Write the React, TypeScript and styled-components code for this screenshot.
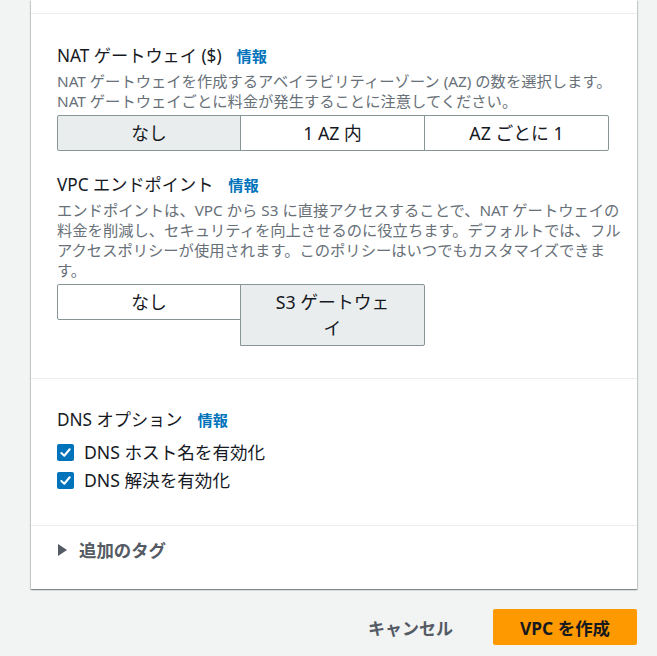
import React from "react";
import styled, { createGlobalStyle } from "styled-components";

const Global = createGlobalStyle`
  html, body { margin: 0; padding: 0; background: #f2f3f3; }
  body { font-family: "Noto Sans", "Noto Sans CJK JP", sans-serif; color: #16191f; }
  * { box-sizing: border-box; }
`;

const Page = styled.div`
  padding: 0 20px 0 31px;
`;

const Card = styled.div`
  background: #fff;
  box-shadow: 0 1px 1px 0 rgba(0, 28, 36, 0.3), 1px 1px 1px 0 rgba(0, 28, 36, 0.15),
    -1px 1px 1px 0 rgba(0, 28, 36, 0.15);
`;

const Section = styled.div<{ $pt: number; $pb: number }>`
  padding: ${(p) => p.$pt}px 12px ${(p) => p.$pb}px 26px;
  & + & { border-top: 1px solid #eaeded; }
`;

const Field = styled.div`
  & + & { margin-top: 23px; }
`;

const Label = styled.div`
  font-size: 17.2px;
  line-height: 22px;
  display: flex;
  align-items: baseline;
`;

const Info = styled.a`
  color: #0073bb;
  font-weight: 700;
  font-size: 15.2px;
  margin-left: 15px;
`;

const Desc = styled.div`
  margin-top: 4px;
  font-size: 15.3px;
  line-height: 20px;
  color: #687078;
`;

const Tiles = styled.div`
  margin-top: 4px;
  display: grid;
  grid-template-columns: repeat(3, 184px);
  align-items: start;
`;

const Tile = styled.div<{ $selected?: boolean; $pos: "first" | "mid" | "last" }>`
  border: 1px solid #879596;
  margin-left: ${(p) => (p.$pos === "first" ? 0 : -1)}px;
  border-radius: ${(p) =>
    p.$pos === "first" ? "2px 0 0 2px" : p.$pos === "last" ? "0 2px 2px 0" : "0"};
  background: ${(p) => (p.$selected ? "#eaeded" : "#fff")};
  padding: 4px 32px;
  min-height: 36px;
  text-align: center;
  font-size: 17.8px;
  line-height: 26px;
  color: #16191f;
`;

const CheckRow = styled.label`
  display: flex;
  align-items: center;
  gap: 10px;
  font-size: 17.6px;
  line-height: 22px;
  margin-top: 10px;
  & + & { margin-top: 6px; }
`;

const Box = styled.span`
  width: 17px;
  height: 17px;
  border-radius: 2px;
  background: #0073bb;
  display: inline-flex;
  align-items: center;
  justify-content: center;
  flex: none;
`;

const Expand = styled.div`
  display: flex;
  align-items: center;
  gap: 12px;
  font-size: 17.4px;
  line-height: 22px;
  font-weight: 700;
  color: #545b64;
`;

const Caret = styled.span`
  width: 0;
  height: 0;
  border-top: 6px solid transparent;
  border-bottom: 6px solid transparent;
  border-left: 9px solid #545b64;
  margin-left: 1px;
`;

const Footer = styled.div`
  display: flex;
  justify-content: flex-end;
  align-items: center;
  padding-top: 20px;
  gap: 20px;
`;

const LinkButton = styled.button`
  background: none;
  border: none;
  padding: 0 20px;
  font-family: inherit;
  font-size: 17px;
  font-weight: 700;
  color: #545b64;
  height: 36px;
`;

const Primary = styled.button`
  background: #ff9900;
  border: none;
  border-radius: 2px;
  width: 144px;
  height: 36px;
  font-family: inherit;
  font-size: 17.4px;
  font-weight: 700;
  color: #16191f;
`;

const Check = () => (
  <Box>
    <svg width="13" height="13" viewBox="0 0 14 14">
      <path d="M2.5 7.5 L5.7 10.5 L11.5 3.5" fill="none" stroke="#fff" strokeWidth="2.2" strokeLinecap="round" strokeLinejoin="round" />
    </svg>
  </Box>
);

export default function App() {
  return (
    <Page>
      <Global />
      <Card>
        <Section $pt={13} $pb={0} />
        <Section $pt={31} $pb={32}>
          <Field>
            <Label>
              NAT ゲートウェイ ($)<Info>情報</Info>
            </Label>
            <Desc>
              NAT ゲートウェイを作成するアベイラビリティーゾーン (AZ) の数を選択します。
              <br />
              NAT ゲートウェイごとに料金が発生することに注意してください。
            </Desc>
            <Tiles>
              <Tile $pos="first" $selected>なし</Tile>
              <Tile $pos="mid">1 AZ 内</Tile>
              <Tile $pos="last">AZ ごとに 1</Tile>
            </Tiles>
          </Field>
          <Field>
            <Label>
              VPC エンドポイント<Info>情報</Info>
            </Label>
            <Desc>
              エンドポイントは、VPC から S3 に直接アクセスすることで、NAT ゲートウェイの
              <br />
              料金を削減し、セキュリティを向上させるのに役立ちます。デフォルトでは、フル
              <br />
              アクセスポリシーが使用されます。このポリシーはいつでもカスタマイズできま
              <br />
              す。
            </Desc>
            <Tiles>
              <Tile $pos="first">なし</Tile>
              <Tile $pos="last" $selected>S3 ゲートウェイ</Tile>
            </Tiles>
          </Field>
        </Section>
        <Section $pt={30} $pb={34}>
          <Label>
            DNS オプション<Info>情報</Info>
          </Label>
          <CheckRow>
            <Check />
            DNS ホスト名を有効化
          </CheckRow>
          <CheckRow>
            <Check />
            DNS 解決を有効化
          </CheckRow>
        </Section>
        <Section $pt={13} $pb={28}>
          <Expand>
            <Caret />
            追加のタグ
          </Expand>
        </Section>
      </Card>
      <Footer>
        <LinkButton>キャンセル</LinkButton>
        <Primary>VPC を作成</Primary>
      </Footer>
    </Page>
  );
}
